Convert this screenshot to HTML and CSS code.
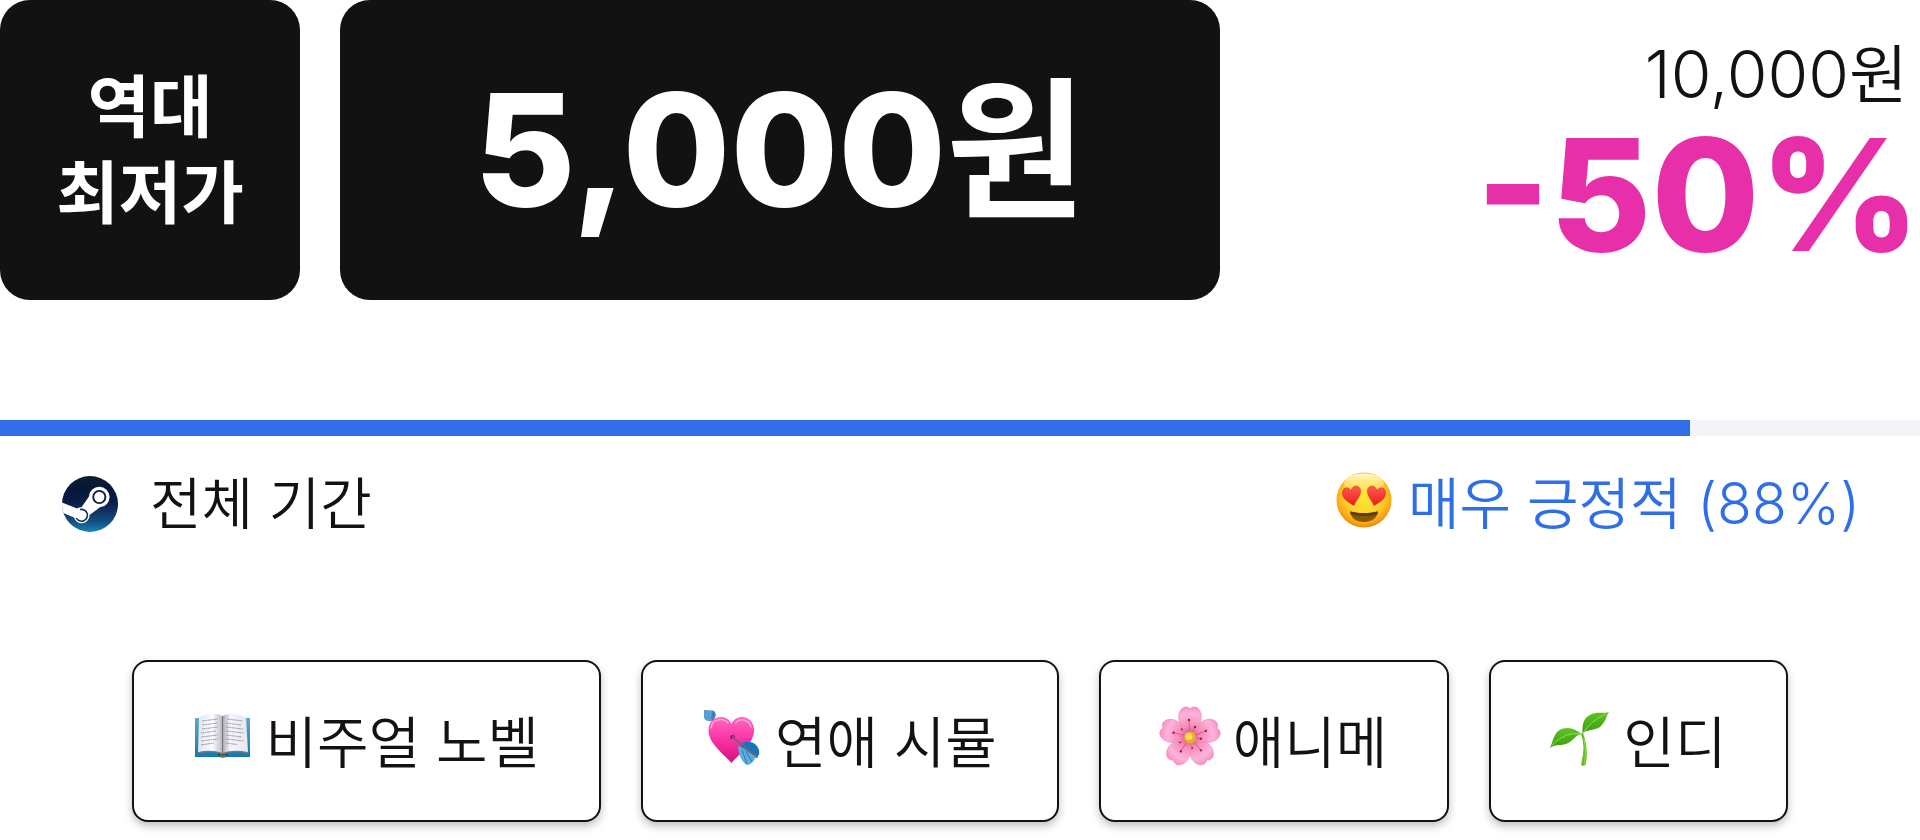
FILE: index.html
```html
<!DOCTYPE html>
<html lang="ko">
<head>
  <meta charset="UTF-8">
  <meta name="viewport" content="width=device-width, initial-scale=1">
  <title>역대 최저가</title>
  <link rel="stylesheet" href="styles.css">
</head>
<body>

<section class="price">
  <div class="badge">역대<br>최저가</div>
  <div class="current"><div><span class="num">5,000</span>원</div></div>
  <div class="discount">
    <div class="original"><span class="num">10,000</span>원</div>
    <div class="percent">-50%</div>
  </div>
</section>

<section class="review">
  <div class="bar">
    <div class="bar-fill" style="width: 88%"></div>
  </div>
  <div class="review-row">
    <div class="period">
      <svg class="steam" viewBox="0 0 56 56" aria-hidden="true">
        <defs>
          <linearGradient id="steamBg" x1="0" y1="0" x2="0" y2="1">
            <stop offset="0" stop-color="#111d2e"/>
            <stop offset=".22" stop-color="#051839"/>
            <stop offset=".45" stop-color="#0a1b48"/>
            <stop offset=".62" stop-color="#132e62"/>
            <stop offset=".8" stop-color="#144b7e"/>
            <stop offset="1" stop-color="#1387b8"/>
          </linearGradient>
          <clipPath id="steamClip"><circle cx="28" cy="28" r="28"/></clipPath>
        </defs>
        <circle cx="28" cy="28" r="28" fill="url(#steamBg)"/>
        <g clip-path="url(#steamClip)">
          <path d="M-1 26 L15 32.500 Q17 31.300 19.500 31.300 L27 20.500 A10.300 10.300 0 1 1 38 31.300 L27.500 39 A7.900 7.900 0 0 1 12 41.500 L-1 36 Z" fill="#fff"/>
          <circle cx="37.300" cy="21" r="6.100" fill="#fff" stroke="#0a1b48" stroke-width="1.900"/>
          <path d="M18 33.600 A5.900 5.900 0 1 1 14.300 42" fill="none" stroke="#132e62" stroke-width="1.600"/>
        </g>
      </svg>
      <span>전체 기간</span>
    </div>
    <div class="score">
      <svg class="emoji" viewBox="0 0 60 60" aria-hidden="true">
        <defs>
          <radialGradient id="face" cx=".5" cy=".42" r=".58">
            <stop offset="0" stop-color="#ffe638"/>
            <stop offset=".55" stop-color="#ffd52b"/>
            <stop offset=".85" stop-color="#fba919"/>
            <stop offset="1" stop-color="#e98a08"/>
          </radialGradient>
          <linearGradient id="shine" x1="0" y1="0" x2="0" y2="1">
            <stop offset="0" stop-color="#fffbd0"/>
            <stop offset="1" stop-color="#fff29a" stop-opacity="0"/>
          </linearGradient>
          <linearGradient id="eye" x1="0" y1="0" x2="0" y2="1">
            <stop offset="0" stop-color="#ff5a52"/>
            <stop offset="1" stop-color="#ee1c1f"/>
          </linearGradient>
        </defs>
        <circle cx="30" cy="30" r="27.500" fill="url(#face)"/>
        <ellipse cx="30" cy="14" rx="20" ry="10.500" fill="url(#shine)"/>
        <path d="M20 35.500 C14 32 8.500 29 8.500 23 C8.500 17 15 16 17 21 C18 14.500 26.500 14.500 26.500 21 C26.500 27 22 30 20 35.500 Z" fill="url(#eye)" stroke="#d22a1a" stroke-width=".6"/>
        <path d="M40 35.500 C46 32 51.500 29 51.500 23 C51.500 17 45 16 43 21 C42 14.500 33.500 14.500 33.500 21 C33.500 27 38 30 40 35.500 Z" fill="url(#eye)" stroke="#d22a1a" stroke-width=".6"/>
        <path d="M16 41.500 Q30 45 44 41.500 C43 48.500 37 52 30 52 C23 52 17 48.500 16 41.500 Z" fill="#8a5504"/>
        <path d="M16 41.500 Q30 45 44 41.500 L43 44.500 Q30 47.500 17 44.500 Z" fill="#5f3a06"/>
      </svg>
      <span>매우 긍정적 <span class="num">(88%)</span></span>
    </div>
  </div>
</section>

<section class="tags">
  <button class="tag" type="button">
    <svg class="emoji" viewBox="0 0 60 60" aria-hidden="true">
      <defs>
        <linearGradient id="pageL" x1="0" x2="1" y1="0" y2="0">
          <stop offset="0" stop-color="#e4e4ea"/>
          <stop offset=".6" stop-color="#fafaff"/>
          <stop offset="1" stop-color="#b9b9c2"/>
        </linearGradient>
        <linearGradient id="pageR" x1="0" x2="1" y1="0" y2="0">
          <stop offset="0" stop-color="#a9a9b2"/>
          <stop offset=".3" stop-color="#f3f3f9"/>
          <stop offset="1" stop-color="#e6e6ee"/>
        </linearGradient>
        <linearGradient id="cover" x1="0" x2="0" y1="0" y2="1">
          <stop offset="0" stop-color="#5fa6cb"/>
          <stop offset="1" stop-color="#1678ae"/>
        </linearGradient>
      </defs>
      <path d="M1 10 H56 V49 H1 Z" fill="url(#cover)"/>
      <path d="M24 45 H34 V48 Q29 51.500 24 48 Z" fill="#12577c"/>
      <path d="M26 47 Q29 50 32 47" fill="none" stroke="#9a7d1b" stroke-width="1.500"/>
      <path d="M4 42 L4 45.500 Q19 42 28.500 46.500 Q39 42 54 45.500 L54 42 Z" fill="#77777c"/>
      <path d="M5 9 Q20 3 28.500 8 L28.500 45 Q18 41 4 44 Z" fill="url(#pageL)"/>
      <path d="M52 9 Q37 3 28.500 8 L28.500 45 Q39 41 54 44 Z" fill="url(#pageR)"/>
      <path d="M28.500 8 V45.500" stroke="#77777f" stroke-width="1.200"/>
      <g fill="none" stroke="#a0a0a8" stroke-width="1" stroke-dasharray="3 .6 2 .5">
        <path d="M8 13 L24 11"/><path d="M8 17 L24 15"/><path d="M8 21 L24 19"/><path d="M7 25 L22 23"/>
        <path d="M7 29 L24 27"/><path d="M7 33 L24 31"/><path d="M7 37 L20 35"/>
        <path d="M33 11 L49 13"/><path d="M32 15 L47 17"/><path d="M32 19 L49 21"/><path d="M32 23 L50 25"/>
        <path d="M32 27 L48 29"/><path d="M32 31 L50 33"/><path d="M32 35 L43 36.500"/>
      </g>
    </svg>
    <span>비주얼 노벨</span>
  </button>
  <button class="tag" type="button">
    <svg class="emoji" viewBox="0 0 60 60" aria-hidden="true">
      <defs>
        <linearGradient id="heart" x1="0" y1="0" x2="0" y2="1">
          <stop offset="0" stop-color="#ff68bd"/>
          <stop offset=".45" stop-color="#fb37a8"/>
          <stop offset="1" stop-color="#d80f80"/>
        </linearGradient>
      </defs>
      <path d="M8 10 L14 15" stroke="#777" stroke-width="2"/>
      <path d="M1 2 L10 2.500 Q13 4 12.500 8 L10 13 Q3 14 1 10 Z" fill="#5a9dd3"/>
      <path d="M10 2.500 Q13 4 12.500 8 L10 13 L8 10 Z" fill="#3d7fb8"/>
      <path d="M28.500 55 C22 47 5.500 36 5.500 22.500 C5.500 7 24 5 28.500 16 C33 5 51 7 51 22.500 C51 36 35 47 28.500 55 Z" fill="url(#heart)"/>
      <path d="M8 20 C9 11 20 9 25 15 M33 14.500 C38 9.500 46 12 48 19" fill="none" stroke="#ffa3d8" stroke-width="1.500" stroke-linecap="round"/>
      <ellipse cx="29.500" cy="29" rx="2.500" ry="2" fill="#a70761"/>
      <path d="M41 34 Q49 33 53 37 Q57 41 56 47 L53 49 L37 39 Z" fill="#1675bd"/>
      <path d="M35 39 Q36 52 44 57 Q49 57 53 49 L37 38 Z" fill="#5cacdf"/>
      <path d="M39 42 L44 56 M43 43 L49 54" stroke="#2e7bb6" stroke-width="1"/>
      <path d="M29.500 29 L54 49" stroke="#686a78" stroke-width="2" stroke-linecap="round"/>
    </svg>
    <span>연애 시뮬</span>
  </button>
  <button class="tag" type="button">
    <svg class="emoji" viewBox="0 0 60 60" aria-hidden="true">
      <defs>
        <radialGradient id="petal" gradientUnits="userSpaceOnUse" cx="29" cy="29" r="31">
          <stop offset="0" stop-color="#e0407c"/>
          <stop offset=".35" stop-color="#f58bb8"/>
          <stop offset=".75" stop-color="#fdb3dc"/>
          <stop offset="1" stop-color="#f58fc0"/>
        </radialGradient>
        <g id="leaf">
          <path d="M29 29 C20 22 15 10 19 3 Q22 -2 26 -1 Q28 -1 29 1 Q30 -1 32 -1 Q36 -2 39 3 C43 10 38 22 29 29 Z" fill="url(#petal)" stroke="#ee86b6" stroke-width=".6"/>
          <path d="M29 27 L28 12 M30 27 L34 19" stroke="#d2587f" stroke-width=".8"/>
          <circle cx="28" cy="12" r="1.200" fill="#a8153f"/>
          <circle cx="34" cy="19" r="1.200" fill="#a8153f"/>
        </g>
      </defs>
      <use href="#leaf" transform="rotate(144 29 29)"/>
      <use href="#leaf" transform="rotate(216 29 29)"/>
      <use href="#leaf" transform="rotate(72 29 29)"/>
      <use href="#leaf" transform="rotate(288 29 29)"/>
      <use href="#leaf"/>
      <circle cx="29" cy="29.500" r="6" fill="#e8ae2b"/>
      <circle cx="28" cy="28.500" r="3.500" fill="#f8dc5a"/>
    </svg>
    <span>애니메</span>
  </button>
  <button class="tag" type="button">
    <svg class="emoji" viewBox="0 0 60 60" aria-hidden="true">
      <defs>
        <linearGradient id="sprout" x1="0" y1="0" x2="0" y2="1">
          <stop offset="0" stop-color="#5fc520"/>
          <stop offset="1" stop-color="#3a9a12"/>
        </linearGradient>
      </defs>
      <path d="M30 26 Q35 38 30 57 Q32 58.500 34.500 57 Q38 42 32 25 Z" fill="#5fbe1c"/>
      <path d="M33 30 Q36 43 33.500 56" fill="none" stroke="#8fdd3b" stroke-width="1"/>
      <path d="M31.500 26 C31 15 33 10 39 7 C45 3 51 6 58 4 C55 8 55 14 49 19 C43 23 35 21 31.500 26 Z" fill="url(#sprout)"/>
      <path d="M31 26 C25 22 20 18.500 12 20.500 C3 23 3 31 -1 40 C4 36 8 38 15 36 C23 33 25 26 31 26 Z" fill="url(#sprout)"/>
      <path d="M32 25 Q39 13 55 6 M30 26 Q15 23 1 37" fill="none" stroke="#93dd55" stroke-width="1"/>
    </svg>
    <span>인디</span>
  </button>
</section>

</body>
</html>
```
FILE: styles.css
```css
body {
  margin: 0;
  background: #fff;
  color: #121212;
  font-family: Inter, "Noto Sans CJK KR", sans-serif;
  font-weight: 350;
}

/* Price */
.price {
  display: flex;
  gap: 40px;
  height: 300px;
}
.badge,
.current {
  display: flex;
  align-items: center;
  justify-content: center;
  background: #121212;
  color: #fff;
  border-radius: 30px;
  font-weight: 700;
  white-space: nowrap;
}
.badge {
  flex: 0 0 300px;
  font-size: 68px;
  line-height: 86px;
  text-align: center;
}
.current {
  flex: 0 1 880px;
  font-size: 152px;
  line-height: 180px;
}
.current .num {
  font-size: 156px;
  font-weight: 800;
}
.discount {
  margin-left: auto;
  padding-top: 8px;
  display: flex;
  flex-direction: column;
  justify-content: center;
  text-align: right;
  white-space: nowrap;
}
.original {
  padding-right: 12px;
  font-size: 64px;
  line-height: 80px;
}
.original .num {
  font-size: 66px;
}
.percent {
  color: #e82faa;
  font-size: 156px;
  font-weight: 800;
  line-height: 160px;
}

/* Review */
.review {
  margin-top: 120px;
}
.bar {
  height: 16px;
  background: #f3f4f9;
}
.bar-fill {
  height: 100%;
  background: #306ee8;
}
.review-row {
  display: flex;
  justify-content: space-between;
  align-items: center;
  padding: 24px 60px 0;
  height: 88px;
  font-size: 56px;
  line-height: 88px;
}
.period,
.score {
  display: flex;
  align-items: center;
  white-space: nowrap;
}
.period {
  gap: 32px;
}
.score {
  gap: 14px;
  color: #306ee8;
}
.score .num {
  font-size: 57px;
}
.steam {
  width: 56px;
  height: 56px;
  margin-left: 2px;
}
.emoji {
  flex: none;
  width: 60px;
  height: 60px;
  overflow: visible;
}
.score .emoji {
  margin-bottom: 8px;
}

/* Tags */
.tags {
  display: flex;
  justify-content: center;
  gap: 40px;
  margin-top: 112px;
  padding-bottom: 18px;
}
.tag {
  display: flex;
  align-items: center;
  gap: 12px;
  height: 162px;
  padding: 0 60px 6px;
  border: 2px solid #121212;
  border-radius: 16px;
  background: #fff;
  box-shadow: 0 4px 8px rgba(0, 0, 0, 0.25);
  color: inherit;
  font: inherit;
  font-size: 56px;
  white-space: nowrap;
  cursor: pointer;
}
```
